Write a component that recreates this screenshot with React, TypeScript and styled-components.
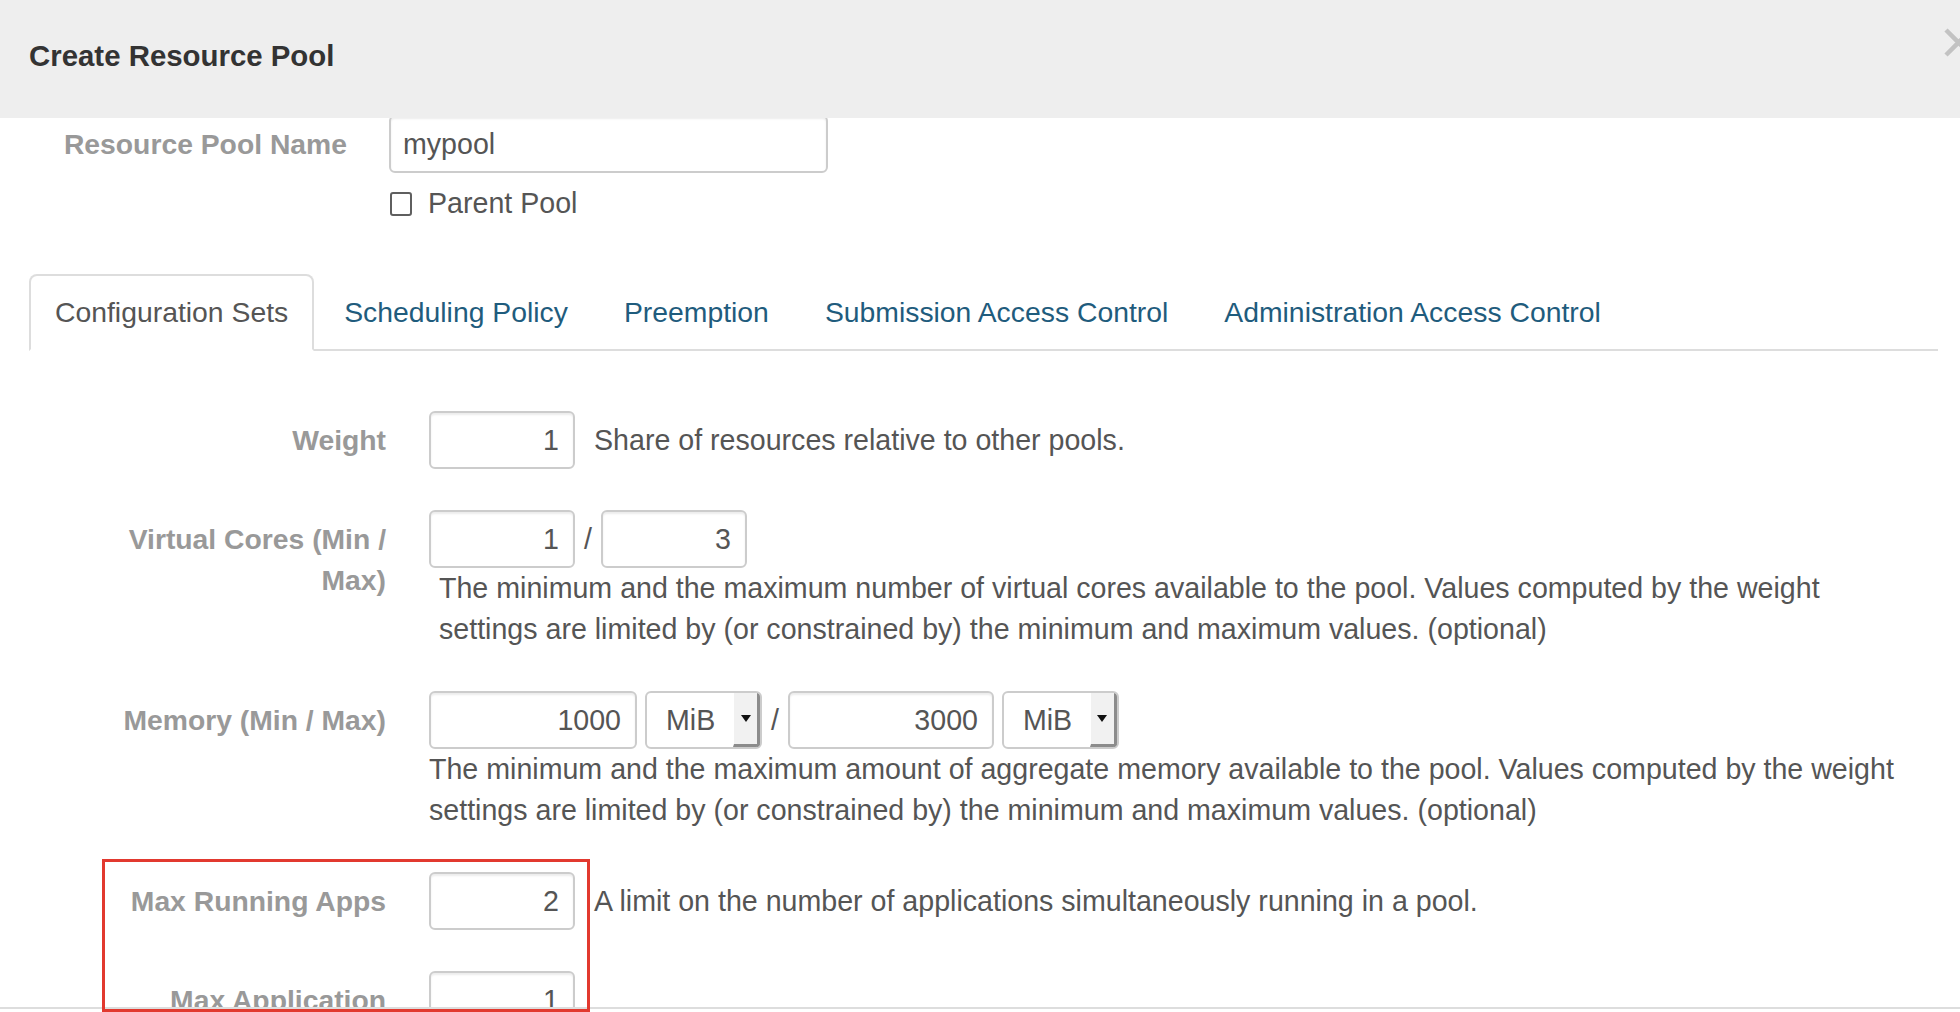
import React from "react";
import styled, { createGlobalStyle } from "styled-components";

const GlobalStyle = createGlobalStyle`
  html, body { margin: 0; padding: 0; background: #ffffff; }
  body {
    font-family: "Liberation Sans", Arial, Helvetica, sans-serif;
    overflow: hidden;
  }
  * { box-sizing: border-box; }
`;

const TEXT = "28.6px";
const LABEL = "28.3px";
const TAB = "28.35px";

const Page = styled.div`
  position: relative;
  width: 1960px;
  height: 1012px;
  display: flex;
  flex-direction: column;
  overflow: hidden;
  background: #ffffff;
`;

const Header = styled.header`
  position: relative;
  z-index: 2;
  flex: 0 0 118px;
  background: #eeeeee;
  display: flex;
  align-items: flex-start;
  justify-content: space-between;
  padding: 35px 0 0 29px;
  overflow: hidden;
`;

const Title = styled.h3`
  margin: 0;
  font-size: 29.4px;
  line-height: 41px;
  font-weight: 700;
  color: #333333;
`;

const CloseButton = styled.button`
  flex: 0 0 29px;
  width: 29px;
  height: 29px;
  margin: -7px -13px 0 0;
  padding: 0;
  border: 0;
  background: transparent;
  display: block;
  svg { display: block; }
`;

const Body = styled.main`
  flex: 1 1 auto;
  overflow: hidden;
  padding: 0 22px 0 29px;
`;

const NameRow = styled.div`
  display: grid;
  grid-template-columns: 318px 439px;
  column-gap: 42px;
  margin-top: -3px;
`;

const NameLabel = styled.label`
  text-align: right;
  font-size: ${LABEL};
  line-height: 58px;
  font-weight: 700;
  color: #999999;
  white-space: nowrap;
`;

const TextInput = styled.input`
  width: 100%;
  height: 58px;
  border: 2px solid #cccccc;
  border-radius: 6px;
  padding: 0 12px;
  font-family: inherit;
  font-size: ${TEXT};
  color: #555555;
  background: #ffffff;
  box-shadow: inset 0 2px 2px rgba(0, 0, 0, 0.075);
  outline: none;
`;

const CheckRow = styled.label`
  display: flex;
  align-items: center;
  gap: 16px;
  margin: 10px 0 0 361px;
  font-size: ${TEXT};
  line-height: 41px;
  color: #555555;
`;

const CheckBox = styled.span`
  flex: 0 0 22px;
  width: 22px;
  height: 24px;
  border: 2px solid #5f5f5f;
  border-radius: 3px;
  background: #ffffff;
`;

const TabList = styled.nav`
  display: flex;
  margin-top: 50px;
  border-bottom: 2px solid #dddddd;
`;

const Tab = styled.a<{ $active?: boolean }>`
  display: block;
  padding: 16px 24px;
  margin: 0 4px -2px 0;
  border: 2px solid transparent;
  border-radius: 8px 8px 0 0;
  font-size: ${TAB};
  line-height: 41px;
  text-decoration: none;
  white-space: nowrap;
  color: ${(p) => (p.$active ? "#555555" : "#1f5c7d")};
  background: ${(p) => (p.$active ? "#ffffff" : "transparent")};
  border-color: ${(p) => (p.$active ? "#dddddd #dddddd transparent" : "transparent")};
`;

const TabContent = styled.section`
  padding-top: 60px;
`;

const FieldRow = styled.div`
  display: grid;
  grid-template-columns: 300px auto;
  column-gap: 43px;
  padding-left: 57px;
  margin-bottom: 41px;
`;

const FieldLabel = styled.label`
  padding-top: 8.5px;
  text-align: right;
  font-size: ${LABEL};
  line-height: 41px;
  font-weight: 700;
  color: #999999;
`;

const Controls = styled.div`
  display: flex;
  flex-direction: column;
  align-items: flex-start;
`;

const InlineGroup = styled.div`
  display: flex;
  align-items: center;
`;

const NumberInput = styled.input<{ $w: number }>`
  width: ${(p) => p.$w}px;
  height: 58px;
  border: 2px solid #cccccc;
  border-radius: 6px;
  padding: 0 14px;
  font-family: inherit;
  font-size: ${TEXT};
  color: #555555;
  text-align: right;
  background: #ffffff;
  box-shadow: inset 0 2px 2px rgba(0, 0, 0, 0.075);
  outline: none;
`;

const Slash = styled.span`
  margin: 0 9px;
  font-size: ${TEXT};
  line-height: 41px;
  color: #555555;
`;

const UnitSelect = styled.div`
  display: flex;
  align-items: stretch;
  width: 117px;
  height: 58px;
  margin-left: 8px;
  border: 2px solid #cccccc;
  border-radius: 6px;
  background: #ffffff;
  overflow: hidden;
`;

const UnitText = styled.span`
  flex: 1 1 auto;
  padding-left: 19px;
  font-size: ${TEXT};
  line-height: 54px;
  color: #555555;
`;

const UnitArrow = styled.span`
  flex: 0 0 27px;
  display: flex;
  align-items: center;
  justify-content: center;
  background: #f1f1f1;
  border-left: 1px solid #ffffff;
  border-right: 3px solid #8c8c8c;
  border-bottom: 3px solid #8c8c8c;
  svg { display: block; }
`;

const HelpInline = styled.span`
  margin-left: 19px;
  font-size: ${TEXT};
  line-height: 41px;
  color: #555555;
  white-space: nowrap;
`;

const HelpBlock = styled.p<{ $indent?: number }>`
  margin: 0;
  padding-left: ${(p) => p.$indent ?? 0}px;
  font-size: ${TEXT};
  line-height: 41px;
  color: #555555;
  white-space: nowrap;
`;

const Footer = styled.footer`
  flex: 0 0 5px;
  border-top: 2px solid #dddddd;
  background: #ffffff;
`;

const Highlight = styled.div`
  position: absolute;
  left: 102px;
  top: 859px;
  width: 488px;
  height: 153px;
  border: 3px solid #e2392f;
  pointer-events: none;
  z-index: 5;
`;

const Caret = () => (
  <svg width="10" height="7" viewBox="0 0 10 7">
    <path d="M0 0 H10 L5 7 Z" fill="#111" />
  </svg>
);

const Unit = ({ value }: { value: string }) => (
  <UnitSelect>
    <UnitText>{value}</UnitText>
    <UnitArrow>
      <Caret />
    </UnitArrow>
  </UnitSelect>
);

const tabs = [
  "Configuration Sets",
  "Scheduling Policy",
  "Preemption",
  "Submission Access Control",
  "Administration Access Control",
];

export default function App() {
  return (
    <>
      <GlobalStyle />
      <Page>
        <Header>
          <Title>Create Resource Pool</Title>
          <CloseButton aria-label="Close">
            <svg width="29" height="29" viewBox="0 0 29 29">
              <path d="M2 2 L27 27 M27 2 L2 27" stroke="#c2c2c2" strokeWidth="4.5" strokeLinecap="butt" />
            </svg>
          </CloseButton>
        </Header>
        <Body>
          <NameRow>
            <NameLabel>Resource Pool Name</NameLabel>
            <TextInput readOnly defaultValue="mypool" />
          </NameRow>
          <CheckRow>
            <CheckBox />
            Parent Pool
          </CheckRow>

          <TabList>
            {tabs.map((t, i) => (
              <Tab key={t} $active={i === 0}>
                {t}
              </Tab>
            ))}
          </TabList>

          <TabContent>
            <FieldRow>
              <FieldLabel>Weight</FieldLabel>
              <Controls>
                <InlineGroup>
                  <NumberInput $w={146} readOnly defaultValue="1" />
                  <HelpInline>Share of resources relative to other pools.</HelpInline>
                </InlineGroup>
              </Controls>
            </FieldRow>

            <FieldRow>
              <FieldLabel>
                Virtual Cores (Min /<br />
                Max)
              </FieldLabel>
              <Controls>
                <InlineGroup>
                  <NumberInput $w={146} readOnly defaultValue="1" />
                  <Slash>/</Slash>
                  <NumberInput $w={146} readOnly defaultValue="3" />
                </InlineGroup>
                <HelpBlock $indent={10}>
                  The minimum and the maximum number of virtual cores available to the pool. Values computed by the weight
                  <br />
                  settings are limited by (or constrained by) the minimum and maximum values. (optional)
                </HelpBlock>
              </Controls>
            </FieldRow>

            <FieldRow>
              <FieldLabel>Memory (Min / Max)</FieldLabel>
              <Controls>
                <InlineGroup>
                  <NumberInput $w={208} readOnly defaultValue="1000" />
                  <Unit value="MiB" />
                  <Slash>/</Slash>
                  <NumberInput $w={206} readOnly defaultValue="3000" />
                  <Unit value="MiB" />
                </InlineGroup>
                <HelpBlock>
                  The minimum and the maximum amount of aggregate memory available to the pool. Values computed by the weight
                  <br />
                  settings are limited by (or constrained by) the minimum and maximum values. (optional)
                </HelpBlock>
              </Controls>
            </FieldRow>

            <FieldRow>
              <FieldLabel>Max Running Apps</FieldLabel>
              <Controls>
                <InlineGroup>
                  <NumberInput $w={146} readOnly defaultValue="2" />
                  <HelpInline>A limit on the number of applications simultaneously running in a pool.</HelpInline>
                </InlineGroup>
              </Controls>
            </FieldRow>

            <FieldRow>
              <FieldLabel>Max Application</FieldLabel>
              <Controls>
                <InlineGroup>
                  <NumberInput $w={146} readOnly defaultValue="1" />
                </InlineGroup>
              </Controls>
            </FieldRow>
          </TabContent>
        </Body>
        <Footer />
        <Highlight />
      </Page>
    </>
  );
}
